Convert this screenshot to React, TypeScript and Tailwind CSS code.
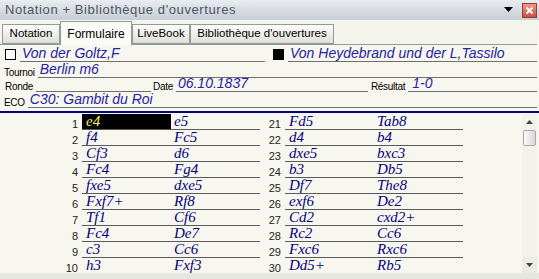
import React from "react";

const LEFT_MOVES: [number, string, string][] = [
  [1, "e4", "e5"],
  [2, "f4", "Fc5"],
  [3, "Cf3", "d6"],
  [4, "Fc4", "Fg4"],
  [5, "fxe5", "dxe5"],
  [6, "Fxf7+", "Rf8"],
  [7, "Tf1", "Cf6"],
  [8, "Fc4", "De7"],
  [9, "c3", "Cc6"],
  [10, "h3", "Fxf3"],
];

const RIGHT_MOVES: [number, string, string][] = [
  [21, "Fd5", "Tab8"],
  [22, "d4", "b4"],
  [23, "dxe5", "bxc3"],
  [24, "b3", "Db5"],
  [25, "Df7", "The8"],
  [26, "exf6", "De2"],
  [27, "Cd2", "cxd2+"],
  [28, "Rc2", "Cc6"],
  [29, "Fxc6", "Rxc6"],
  [30, "Dd5+", "Rb5"],
];

const sans = { fontFamily: "'Liberation Sans', Arial, sans-serif" };

const Tab = ({ label, width, active }: { label: string; width: string; active?: boolean }) =>
  active ? (
    <div
      className={`${width} h-[24px] -mb-px flex items-center justify-center border border-b-0 border-[#919b9c] bg-[#fbfbf6] text-[12px] text-black`}
    >
      {label}
    </div>
  ) : (
    <div
      className={`${width} h-[20px] flex items-center justify-center border border-[#919b9c] bg-gradient-to-b from-[#fdfdfd] to-[#deded8] text-[11.5px] text-black`}
    >
      {label}
    </div>
  );

const Field = ({ value, className = "" }: { value?: string; className?: string }) => (
  <div
    className={`border-b border-[#707070] h-full flex items-end text-[14px] italic leading-[16px] text-[#2323a3] pl-[2px] ${className}`}
  >
    {value}
  </div>
);

const Label = ({ text }: { text: string }) => (
  <span className="text-[10px] leading-[10px] text-black mr-[3px] tracking-[-0.3px]">{text}</span>
);

const MoveColumn = ({ rows, numWidth }: { rows: [number, string, string][]; numWidth: string }) => (
  <div className="flex flex-col">
    {rows.map(([n, w, b]) => (
      <div key={n} className="flex h-[16px]">
        <div
          className={`${numWidth} flex items-end justify-end pr-[4px] text-[11px] leading-[12px] text-[#222]`}
          style={sans}
        >
          {n}
        </div>
        <div
          className="flex w-[178px] border-b border-[#5a5a5a] text-[15px] italic leading-[15px]"
          style={{ fontFamily: "'Liberation Serif', 'Times New Roman', serif" }}
        >
          <div
            className={`w-[89px] pl-[4px] ${n === 1 ? "bg-black text-[#f4f15a]" : "text-[#00007e]"}`}
          >
            {w}
          </div>
          <div className="w-[89px] pl-[3px] text-[#00007e]">{b}</div>
        </div>
      </div>
    ))}
  </div>
);

export default function App() {
  return (
    <div className="w-[539px] h-[279px] overflow-hidden bg-[#f8f7ef] flex flex-col" style={sans}>
      {/* Title bar */}
      <div className="h-[20px] flex items-center bg-gradient-to-b from-[#e9ecf0] to-[#c7cdd5] pl-[5px] pr-[2px]">
        <span className="text-[13px] tracking-[0.6px] text-[#4b5563] flex-1">
          Notation + Bibliothèque d'ouvertures
        </span>
        <svg width="9" height="6" viewBox="0 0 9 6" className="mr-[9px]">
          <path d="M0 0h9L4.5 5z" fill="#000" />
        </svg>
        <div className="w-[15px] h-[15px] border border-[#9a3b30] bg-gradient-to-b from-[#e89a8c] to-[#c9503f] flex items-center justify-center">
          <svg width="9" height="9" viewBox="0 0 9 9">
            <path d="M1.5 1.5l6 6M7.5 1.5l-6 6" stroke="#fff" strokeWidth="2" />
          </svg>
        </div>
      </div>

      {/* Tabs */}
      <div className="h-[25px] flex items-end pl-[2px] bg-[#f4f3ec] border-b border-[#919b9c] mr-[2px]">
        <Tab label="Notation" width="w-[58px]" />
        <Tab label="Formulaire" width="w-[72px]" active />
        <Tab label="LiveBook" width="w-[58px]" />
        <Tab label="Bibliothèque d'ouvertures" width="w-[144px]" />
      </div>

      {/* Game header */}
      <div className="flex flex-col pr-[2px]">
        <div className="h-[17px] flex items-end">
          <div className="w-[11px] h-[11px] border border-black bg-white ml-[5px] mr-[4px] mb-[2px]" />
          <Field value="Von der Goltz,F" className="w-[245px]" />
          <div className="w-[11px] h-[11px] bg-black ml-[8px] mr-[4px] mb-[2px]" />
          <Field value="Von Heydebrand und der L,Tassilo" className="flex-1" />
        </div>
        <div className="h-[16px] flex items-end pl-[4px]">
          <Label text="Tournoi" />
          <Field value="Berlin m6" className="flex-1" />
        </div>
        <div className="h-[14px] flex items-end pl-[5px]">
          <Label text="Ronde" />
          <Field className="w-[115px]" />
          <span className="ml-[2px]" />
          <Label text="Date" />
          <Field value="06.10.1837" className="w-[192px]" />
          <span className="ml-[3px]" />
          <Label text="Résultat" />
          <Field value="1-0" className="flex-1 pl-[4px]" />
        </div>
        <div className="h-[16px] flex items-end pl-[4px]">
          <Label text="ECO" />
          <Field value="C30: Gambit du Roi" className="flex-1" />
        </div>
      </div>

      <div className="h-[3px]" />
      <div className="h-[2px] bg-[#000080]" />

      {/* Moves */}
      <div className="flex flex-1 pt-[1px] min-h-0">
        <div className="flex-1 flex">
          <MoveColumn rows={LEFT_MOVES} numWidth="w-[82px]" />
          <MoveColumn rows={RIGHT_MOVES} numWidth="w-[25px]" />
        </div>
        {/* Scrollbar */}
        <div className="w-[15px] mr-[2px] flex flex-col bg-[#f3f2ea]">
          <div className="h-[16px] flex items-center justify-center">
            <svg width="7" height="4" viewBox="0 0 7 4">
              <path d="M0 4h7L3.5 0z" fill="#444" />
            </svg>
          </div>
          <div className="h-[16px] mx-[1px] rounded-[2px] border border-[#a9a9a9] bg-gradient-to-r from-[#fafafa] to-[#d7d7d7]" />
          <div className="flex-1" />
          <div className="h-[16px] flex items-center justify-center bg-[#ebebe6]">
            <svg width="7" height="4" viewBox="0 0 7 4">
              <path d="M0 0h7L3.5 4z" fill="#444" />
            </svg>
          </div>
        </div>
      </div>
      <div className="h-[6px] bg-[#e6e6e2]" />
    </div>
  );
}
